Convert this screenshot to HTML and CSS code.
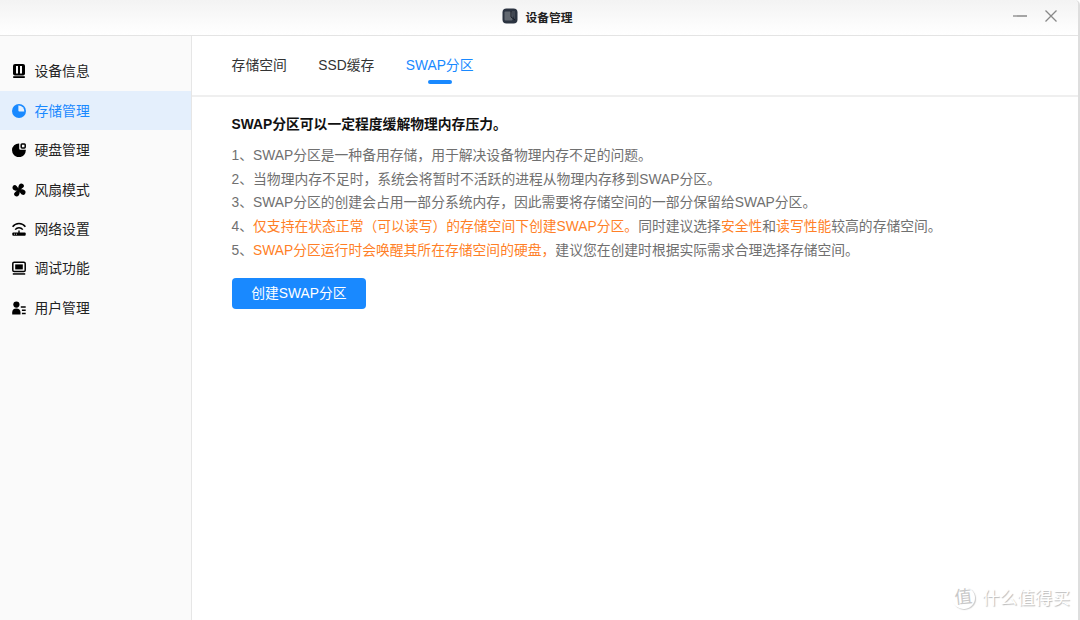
FILE: index.html
```
<!DOCTYPE html>
<html lang="zh-CN">
<head>
    <meta charset="UTF-8">
    <meta name="viewport" content="width=device-width, initial-scale=1.0">
    <title>设备管理</title>
    <link rel="stylesheet" href="styles.css">
</head>
<body>
    <div class="window">
        <header class="titlebar">
            <div class="title">
                <svg class="app-icon" viewBox="0 0 16 16">
                    <rect x="0.5" y="0.5" width="15" height="15" rx="4" fill="#2b3340"/>
                    <rect x="2.5" y="3.5" width="8" height="9" rx="1" fill="#626870"/>
                    <path d="M9 3h4v9z" fill="#414751"/>
                    <path d="M9 3v6l4 3" fill="none" stroke="#161b24"/>
                </svg>
                <span>设备管理</span>
            </div>
            <div class="controls">
                <svg viewBox="0 0 14 14"><path d="M0 7h14"/></svg>
                <svg viewBox="0 0 14 14"><path d="M1.5 1.5l11 11M12.5 1.5l-11 11"/></svg>
            </div>
        </header>
        <div class="body">
            <nav class="sidebar">
                <a class="item">
                    <svg viewBox="0 0 14 14">
                        <rect x="1" y="0" width="12" height="11.4" rx="2"/>
                        <path d="M1.2 12.2h11.6v1.8H1.2z"/>
                        <path class="cut" d="M4 2h2v7.4H4zM8 2h2v7.4H8z"/>
                    </svg>
                    <span>设备信息</span>
                </a>
                <a class="item active">
                    <svg viewBox="0 0 14 14">
                        <circle cx="7" cy="7" r="7"/>
                        <path class="cut" d="M6.4 1.5A5.5 5.5 0 0 1 12.3 7.6H7.4a1 1 0 0 1-1-1z"/>
                    </svg>
                    <span>存储管理</span>
                </a>
                <a class="item">
                    <svg viewBox="0 0 14 14">
                        <path d="M7.2.4V5.6a1.2 1.2 0 0 0 1.2 1.2h5.4A6.9 6.9 0 1 1 7.2.4z"/>
                        <rect class="line" x="9.2" y=".9" width="4" height="4" rx=".8"/>
                    </svg>
                    <span>硬盘管理</span>
                </a>
                <a class="item">
                    <svg viewBox="0 0 14 14">
                        <g transform="rotate(32 7 7)">
                            <path id="blade" d="M6.4 7C4.9 5.6 4.1 3.6 4.4 1.7 4.9-.7 8.8-.8 9.3 1.5c.3 1.8-1.2 3.1-1.2 5.1z"/>
                            <use href="#blade" transform="rotate(90 7 7)"/>
                            <use href="#blade" transform="rotate(180 7 7)"/>
                            <use href="#blade" transform="rotate(270 7 7)"/>
                        </g>
                    </svg>
                    <span>风扇模式</span>
                </a>
                <a class="item">
                    <svg viewBox="0 0 14 14">
                        <path class="arc" d="M.6 4.7C3.8.4 10.2.4 13.4 4.7M3.2 7.6C5.2 5 8.8 5 10.8 7.6"/>
                        <path d="M6.3 8.4h1.4v2.6H6.3z"/>
                        <rect x=".3" y="10.4" width="13.4" height="3.3" rx="1"/>
                        <path class="cut" d="M2 11.7h1v.8H2zM4 11.7h1v.8H4z"/>
                    </svg>
                    <span>网络设置</span>
                </a>
                <a class="item">
                    <svg viewBox="0 0 14 14">
                        <rect class="arc" x=".8" y="1.2" width="12.4" height="9.4" rx="1.4"/>
                        <rect x="3.2" y="3.4" width="7.6" height="5"/>
                        <path d="M.8 12.2h12.4v1.5H.8z"/>
                    </svg>
                    <span>调试功能</span>
                </a>
                <a class="item">
                    <svg viewBox="0 0 14 14">
                        <circle cx="4.4" cy="3.6" r="3.1"/>
                        <path d="M.2 13.4V11.4c0-2.5 1.5-3.9 4.1-3.9s4.2 1.4 4.2 3.9v2z"/>
                        <path d="M8.8 5.2h4.9v1.6H8.8zM9.9 8.4h3.8V10H9.9zM9.9 11.7h3.8v1.6H9.9z"/>
                    </svg>
                    <span>用户管理</span>
                </a>
            </nav>
            <main class="main">
                <div class="tabs">
                    <a class="tab">存储空间</a>
                    <a class="tab">SSD缓存</a>
                    <a class="tab active">SWAP分区</a>
                </div>
                <section class="content">
                    <h1>SWAP分区可以一定程度缓解物理内存压力。</h1>
                    <div class="notes">
                        <p>1、SWAP分区是一种备用存储，用于解决设备物理内存不足的问题。</p>
                        <p>2、当物理内存不足时，系统会将暂时不活跃的进程从物理内存移到SWAP分区。</p>
                        <p>3、SWAP分区的创建会占用一部分系统内存，因此需要将存储空间的一部分保留给SWAP分区。</p>
                        <p>4、<em>仅支持在状态正常（可以读写）的存储空间下创建SWAP分区。</em>同时建议选择<em>安全性</em>和<em>读写性能</em>较高的存储空间。</p>
                        <p>5、<em>SWAP分区运行时会唤醒其所在存储空间的硬盘，</em>建议您在创建时根据实际需求合理选择存储空间。</p>
                    </div>
                    <button type="button">创建SWAP分区</button>
                </section>
            </main>
        </div>
        <div class="watermark">
            <span class="badge">值</span>
            <span>什么值得买</span>
        </div>
    </div>
</body>
</html>
```
FILE: styles.css
```
* {
    box-sizing: border-box;
}

body {
    margin: 0;
    font-family: "Liberation Sans", "Noto Sans CJK SC", sans-serif;
    font-size: 13.8px;
    color: #333;
    background-color: #fff;
}

.window {
    position: relative;
    display: flex;
    flex-direction: column;
    width: 1080px;
    height: 620px;
    border-right: 2px solid #dedede;
    border-top-right-radius: 5px;
    overflow: hidden;
}

.titlebar {
    display: grid;
    grid-template-columns: 1fr auto 1fr;
    align-items: center;
    height: 36px;
    padding: 0 20px 3px 17px;
    background: linear-gradient(#f3f3f3, #fff);
    border-bottom: 1px solid #e4e4e4;
}

.title {
    grid-column: 2;
    display: flex;
    align-items: center;
    gap: 7px;
    font-size: 11.8px;
    font-weight: bold;
    color: #222;
}

.app-icon {
    width: 16px;
    height: 16px;
}

.controls {
    display: flex;
    justify-content: flex-end;
    gap: 17px;
}

.controls svg {
    width: 14px;
    height: 14px;
    fill: none;
    stroke: #888;
    stroke-width: 1.3;
}

.body {
    display: flex;
    flex: 1;
}

.sidebar {
    width: 192px;
    padding-top: 15.5px;
    background-color: #fafafa;
    border-right: 1px solid #e6e6e6;
}

.item {
    display: flex;
    align-items: center;
    gap: 8.5px;
    height: 39.45px;
    padding-left: 12px;
    color: #222;
}

.item span {
    padding-bottom: 2px;
}

.item svg {
    width: 14px;
    height: 14px;
    fill: #000;
}

.item .cut {
    fill: #fafafa;
}

.item .line,
.item .arc {
    fill: none;
    stroke: #000;
    stroke-width: 1.5;
}

.item.active {
    color: #1989ff;
    background-color: #e4effc;
}

.item.active svg {
    fill: #1989ff;
}

.item.active .cut {
    fill: #e4effc;
}

.main {
    flex: 1;
}

.tabs {
    display: flex;
    gap: 31.5px;
    height: 61px;
    padding-left: 39.6px;
    border-bottom: 2px solid #efefef;
}

.tab {
    position: relative;
    line-height: 59px;
}

.tab.active {
    color: #1989ff;
}

.tab.active::after {
    content: "";
    position: absolute;
    left: 50%;
    bottom: 11px;
    width: 24px;
    height: 4px;
    margin-left: -12px;
    border-radius: 2px;
    background-color: #1989ff;
}

.content {
    padding: 16px 39.6px;
}

h1 {
    margin: 0 0 8px;
    font-size: 13.8px;
    line-height: 23px;
    color: #111;
}

.notes p {
    margin: 0;
    line-height: 23.7px;
    color: #707070;
    white-space: nowrap;
}

.notes em {
    font-style: normal;
    color: #ff7f27;
}

button {
    display: block;
    width: 134.5px;
    height: 31.5px;
    margin-top: 15px;
    padding: 0 0 3px;
    font-family: inherit;
    font-size: 13.8px;
    color: #fff;
    background-color: #1989ff;
    border: none;
    border-radius: 4px;
}

.watermark {
    position: absolute;
    right: 8px;
    bottom: 9px;
    display: flex;
    align-items: center;
    gap: 7px;
    font-size: 17.6px;
    line-height: 26px;
    color: #fff;
    text-shadow: 1px 1px 1px #bbb;
}

.badge {
    width: 23px;
    height: 22px;
    border-radius: 50%;
    box-shadow: 1px 1px 1px #ccc;
    line-height: 21px;
    text-align: center;
    color: #c8c8c8;
    text-shadow: none;
    transform: rotate(-6deg);
}
```
